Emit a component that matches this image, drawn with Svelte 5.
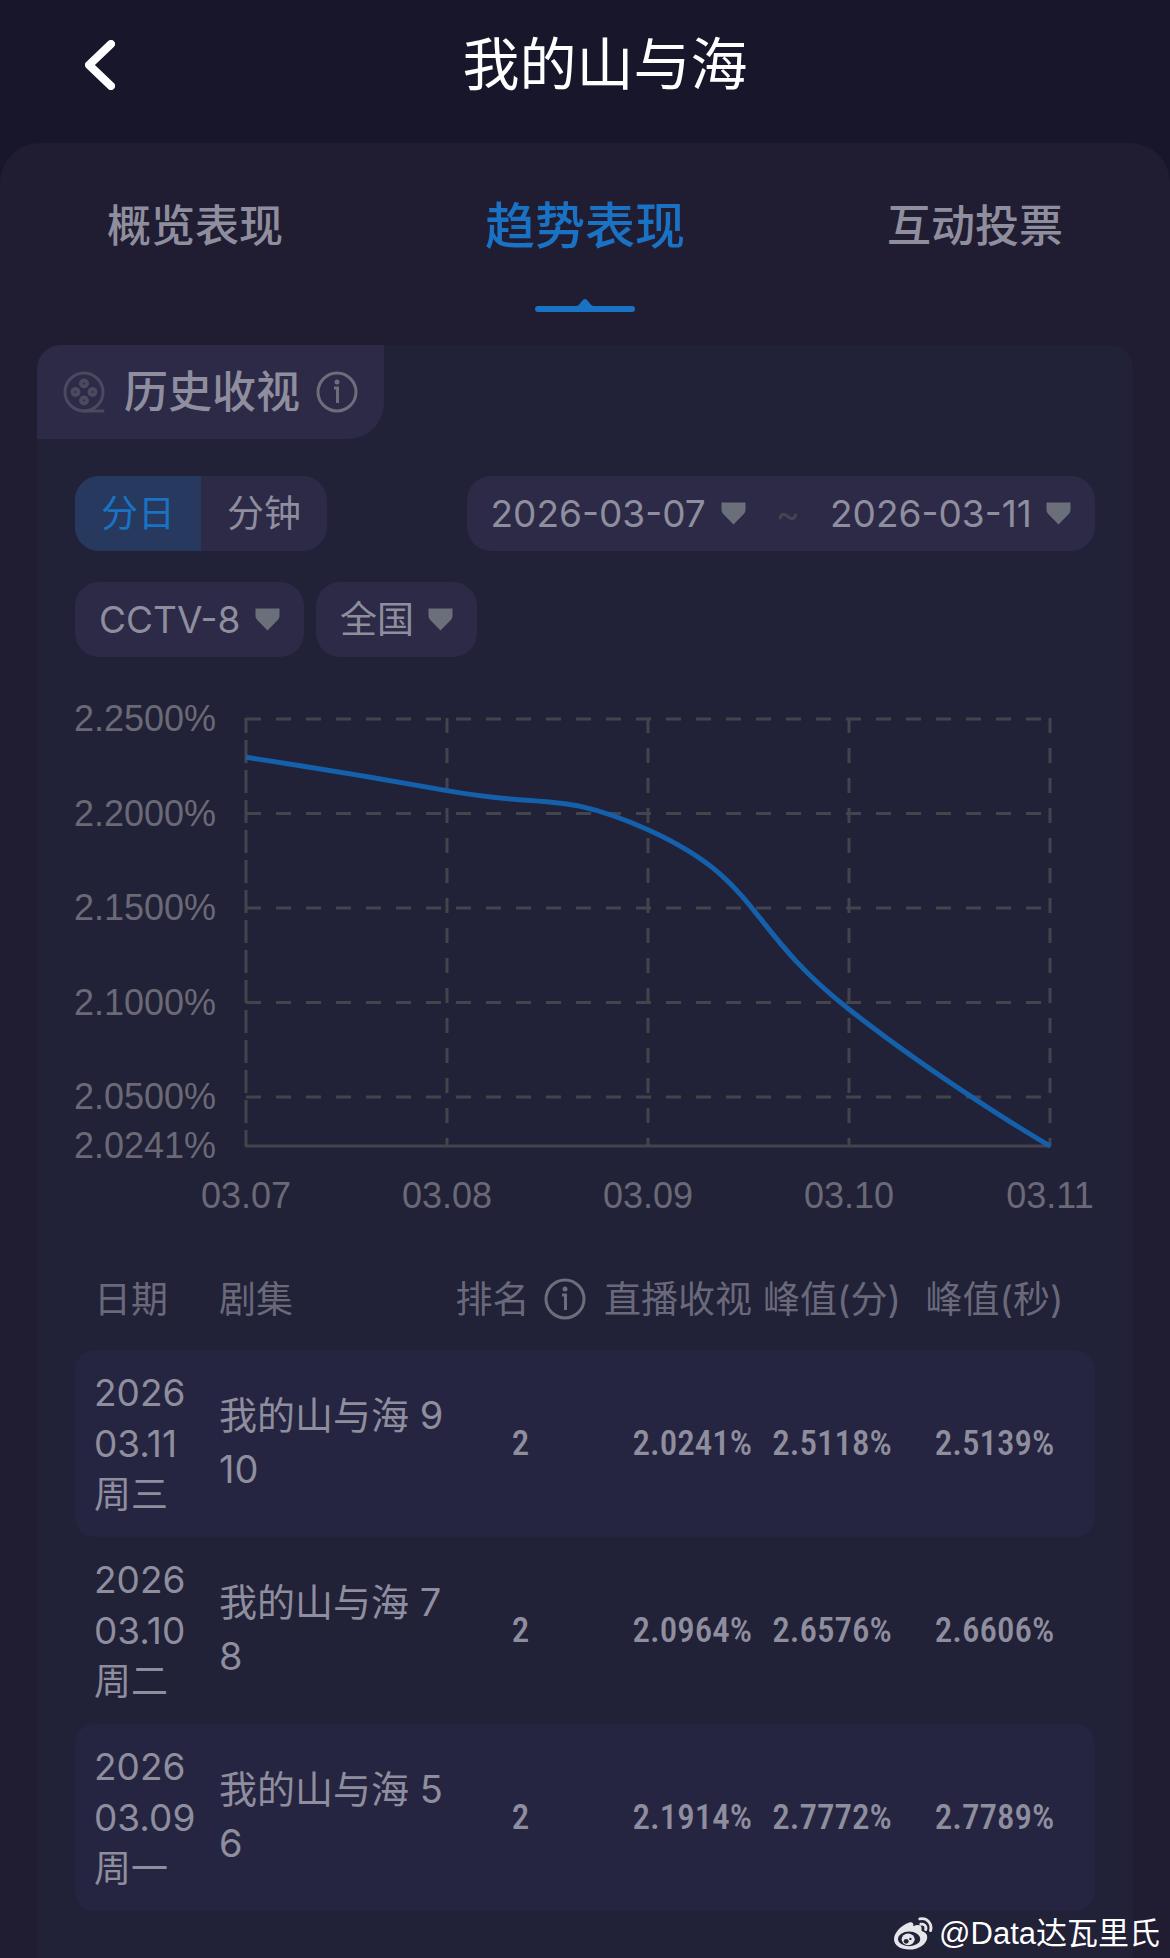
<script>
  const tabs = ['概览表现', '趋势表现', '互动投票'];
  let activeTab = '趋势表现';

  const modes = ['分日', '分钟'];
  let mode = '分日';

  let channel = 'CCTV-8';
  let region = '全国';
  let startDate = '2026-03-07';
  let endDate = '2026-03-11';

  const points = [
    { date: '03.07', value: 2.2298 },
    { date: '03.08', value: 2.2121 },
    { date: '03.09', value: 2.1914 },
    { date: '03.10', value: 2.0964 },
    { date: '03.11', value: 2.0241 }
  ];
  const ticks = [2.25, 2.2, 2.15, 2.1, 2.05, 2.0241];

  const rows = [
    { date: ['2026', '03.11', '周三'], episode: '我的山与海 9 10', rank: 2, live: '2.0241%', minute: '2.5118%', second: '2.5139%' },
    { date: ['2026', '03.10', '周二'], episode: '我的山与海 7 8', rank: 2, live: '2.0964%', minute: '2.6576%', second: '2.6606%' },
    { date: ['2026', '03.09', '周一'], episode: '我的山与海 5 6', rank: 2, live: '2.1914%', minute: '2.7772%', second: '2.7789%' }
  ];

  // plot area inside the 1020 x 558 chart
  const left = 171;
  const right = 975;
  const top = 29;
  const bottom = 456;
  const min = 2.0241;
  const max = 2.25;

  const x = (i) => left + (i * (right - left)) / (points.length - 1);
  const y = (v) => bottom - ((v - min) / (max - min)) * (bottom - top);
  const clamp = (v, a, b) => Math.min(Math.max(v, Math.min(a, b)), Math.max(a, b));

  // smooth line whose control points never leave the range of their neighbours
  function smoothPath(list) {
    const pts = list.map((p, i) => [x(i), y(p.value)]);
    const dist = (a, b) => Math.hypot(b[0] - a[0], b[1] - a[1]);
    const controls = pts.map((p, i) => {
      const prev = pts[i - 1];
      const next = pts[i + 1];
      if (!prev || !next) return { before: p, after: p };
      const lenPrev = dist(prev, p);
      const lenNext = dist(p, next);
      const k = 0.5 / (lenPrev + lenNext);
      const v = [next[0] - prev[0], next[1] - prev[1]];
      const before = [p[0] - v[0] * k * lenPrev, clamp(p[1] - v[1] * k * lenPrev, prev[1], p[1])];
      const scale = lenNext / lenPrev;
      const after = [p[0] + (p[0] - before[0]) * scale, clamp(p[1] + (p[1] - before[1]) * scale, p[1], next[1])];
      return { before, after };
    });
    let d = `M${pts[0]}`;
    for (let i = 1; i < pts.length; i++) {
      d += ` C${controls[i - 1].after} ${controls[i].before} ${pts[i]}`;
    }
    return d;
  }

  const linePath = smoothPath(points);
</script>

{#snippet arrow()}
  <svg class="arrow" viewBox="0 0 25 23" aria-hidden="true">
    <path d="M0.500 0.500h24v7.500c0 1.500-.6 2.600-1.500 3.700L12.500 22.500 2 11.700C1.100 10.600.5 9.500.5 8z" />
  </svg>
{/snippet}

{#snippet info()}
  <svg class="info" viewBox="0 0 42 42" aria-hidden="true">
    <circle cx="21" cy="21" r="19" />
    <path d="M18 17h3.500v15" />
    <circle class="dot" cx="21" cy="11" r="2.500" />
  </svg>
{/snippet}

<div class="page">
  <header class="header">
    <button class="back" aria-label="返回">
      <svg viewBox="0 0 30 50" aria-hidden="true">
        <path d="M26 4L4 25l22 21" />
      </svg>
    </button>
    <h1>我的山与海</h1>
  </header>

  <main class="panel">
    <nav class="tabs">
      {#each tabs as tab}
        <button class="tab" class:active={tab === activeTab} on:click={() => (activeTab = tab)}>
          {tab}
          {#if tab === activeTab}
            <svg class="marker" viewBox="0 0 100 14" aria-hidden="true">
              <path d="M3 7h38c4 0 6-7 9-7s5 7 9 7h38a3 3 0 0 1 0 6H3a3 3 0 0 1 0-6z" />
            </svg>
          {/if}
        </button>
      {/each}
    </nav>

    <section class="card">
      <div class="card-title">
        <svg class="reel" viewBox="0 0 42 42" aria-hidden="true">
          <circle cx="21" cy="21" r="19" />
          <path d="M21 40h19" />
          <circle class="hole" cx="21" cy="12.500" r="3" />
          <circle class="hole" cx="12.500" cy="21" r="3" />
          <circle class="hole" cx="29.500" cy="21" r="3" />
          <circle class="hole" cx="21" cy="29.500" r="3" />
        </svg>
        <h2>历史收视</h2>
        {@render info()}
      </div>

      <div class="filters">
        <div class="filter-row">
          <div class="segment">
            {#each modes as m}
              <button class:selected={m === mode} on:click={() => (mode = m)}>{m}</button>
            {/each}
          </div>
          <div class="chip">
            <label class="field">
              <select aria-label="开始日期" bind:value={startDate}>
                <option>2026-03-07</option>
              </select>
              {@render arrow()}
            </label>
            <span class="tilde">~</span>
            <label class="field">
              <select aria-label="结束日期" bind:value={endDate}>
                <option>2026-03-11</option>
              </select>
              {@render arrow()}
            </label>
          </div>
        </div>
        <div class="filter-row start">
          <label class="chip field">
            <select aria-label="频道" bind:value={channel}>
              <option>CCTV-8</option>
            </select>
            {@render arrow()}
          </label>
          <label class="chip field">
            <select aria-label="地区" bind:value={region}>
              <option>全国</option>
            </select>
            {@render arrow()}
          </label>
        </div>
      </div>

      <svg class="chart" viewBox="0 0 1020 558" role="img" aria-label="历史收视">
        {#each ticks as tick}
          {#if tick === min}
            <line class="grid" x1={left - 1} x2={right + 1} y1={y(tick)} y2={y(tick)} />
          {:else}
            <line class="grid dashed" x1={left} x2={right} y1={y(tick)} y2={y(tick)} />
          {/if}
          <text class="end" x="141" y={y(tick) + 12}>{tick.toFixed(4)}%</text>
        {/each}
        {#each points as point, i}
          <line class="grid" class:dashed={i > 0} class:axis={i === 0} x1={x(i)} x2={x(i)} y1={top - 1} y2={bottom} />
          <text class="middle" x={x(i)} y="518">{point.date}</text>
        {/each}
        <path class="line" d={linePath} />
      </svg>

      <table>
        <colgroup>
          <col class="c-date" />
          <col class="c-episode" />
          <col class="c-rank" />
          <col class="c-live" />
          <col class="c-minute" />
          <col class="c-second" />
        </colgroup>
        <thead>
          <tr>
            <th class="date">日期</th>
            <th>剧集</th>
            <th class="center"><span class="rank-head">排名 {@render info()}</span></th>
            <th class="right">直播收视</th>
            <th class="center">峰值(分)</th>
            <th class="center last">峰值(秒)</th>
          </tr>
        </thead>
        <tbody>
          {#each rows as row}
            <tr>
              <td class="date">
                {#each row.date as part}
                  <div>{part}</div>
                {/each}
              </td>
              <td class="episode">{row.episode}</td>
              <td class="num center">{row.rank}</td>
              <td class="num right">{row.live}</td>
              <td class="num center">{row.minute}</td>
              <td class="num center last">{row.second}</td>
            </tr>
          {/each}
        </tbody>
      </table>
    </section>
  </main>

  <div class="watermark">
    <svg viewBox="0 0 40 34" aria-hidden="true">
      <path d="M15 5.500c3-1.200 5.500-.2 4.800 3.500 4-1.800 9-2 8.500 3-.1 1-.3 1.600.8 2.200 3 1 5.200 3 5 6.300C33.800 27 25.500 33 15.500 33 7 33 0 29 0 22.500 0 15 8.500 7.500 15 5.500z" />
      <ellipse class="cut" cx="15.500" cy="22" rx="11.500" ry="7.500" />
      <ellipse cx="14.500" cy="22.500" rx="6.700" ry="6" />
      <circle class="cut" cx="12.500" cy="24.500" r="2.500" />
      <circle class="cut" cx="16.800" cy="22" r="1.200" />
      <path class="wave" d="M26.500 1.500c7.500-1.500 13 5 11 12M27.500 7c3.600-.8 6 2 5 5.500" />
    </svg>
    <span>@Data达瓦里氏</span>
  </div>
</div>

<style>
  :global(body) {
    background: #18162a;
  }

  .page {
    position: relative;
    display: flex;
    flex-direction: column;
    min-height: 100vh;
    font-family: 'Inter', 'Noto Sans CJK SC', sans-serif;
    font-size: 37px;
    line-height: 51px;
    color: #8f8e9e;
  }

  button,
  select {
    padding: 0;
    border: none;
    background: none;
    font: inherit;
    color: inherit;
    cursor: pointer;
  }

  h1,
  h2 {
    margin: 0;
    font-weight: 400;
  }

  .header {
    display: grid;
    grid-template-columns: 1fr auto 1fr;
    align-items: center;
    height: 129px;
    padding: 0 0 14px 40px;
  }

  .header h1 {
    font-size: 57px;
    line-height: 80px;
    color: #fff;
  }

  .back {
    justify-self: start;
    display: flex;
    padding: 0 45px;
  }

  .back svg {
    width: 30px;
    height: 50px;
    fill: none;
    stroke: #fff;
    stroke-width: 8;
    stroke-linecap: round;
    stroke-linejoin: round;
  }

  .panel {
    flex: 1;
    padding: 53px 37px 0;
    border-radius: 40px 40px 0 0;
    background: #201d32;
  }

  .tabs {
    display: grid;
    grid-template-columns: repeat(3, 1fr);
    height: 149px;
    margin: 0 -37px;
  }

  .tab {
    display: flex;
    flex-direction: column;
    align-items: center;
    font-size: 44px;
    font-weight: 500;
    line-height: 60px;
  }

  .tab.active {
    font-size: 50px;
    color: #1a72c4;
  }

  .marker {
    width: 100px;
    height: 14px;
    margin-top: 43px;
    fill: #1a72c4;
  }

  .card {
    padding-bottom: 47px;
    border-radius: 24px 24px 0 0;
    background: #212138;
  }

  .card-title {
    display: flex;
    align-items: center;
    width: fit-content;
    height: 94px;
    padding: 0 26px;
    border-radius: 24px 0 36px 0;
    background: #2c2a47;
  }

  .card-title h2 {
    margin: 0 16px 0 19px;
    font-size: 44px;
    font-weight: 500;
    line-height: 60px;
  }

  .reel,
  .info {
    flex: none;
    width: 42px;
    height: 42px;
    fill: none;
    stroke: #6b6f79;
    stroke-width: 3;
  }

  .reel {
    stroke: #4b495f;
    stroke-linecap: round;
  }

  .reel .hole {
    stroke-width: 4;
  }

  .info .dot {
    fill: #6b6f79;
    stroke: none;
  }

  .filters {
    display: flex;
    flex-direction: column;
    gap: 31px;
    padding: 37px 38px 33px;
  }

  .filter-row {
    display: flex;
    justify-content: space-between;
  }

  .filter-row.start {
    justify-content: flex-start;
    gap: 12px;
  }

  .segment {
    display: flex;
    overflow: hidden;
    border-radius: 24px;
    background: #2c2a47;
  }

  .segment button {
    width: 126px;
    height: 75px;
  }

  .segment .selected {
    background: #27395f;
    color: #1a72c4;
  }

  .chip {
    display: flex;
    align-items: center;
    height: 75px;
    padding: 0 24px;
    border-radius: 24px;
    background: #2c2a47;
  }

  .field {
    display: flex;
    align-items: center;
    gap: 14px;
  }

  select {
    appearance: none;
    outline: none;
  }

  .arrow {
    width: 25px;
    height: 23px;
    fill: #6b6f79;
  }

  .tilde {
    margin: 0 30px;
    color: #43454c;
  }

  .chart {
    display: block;
    width: calc(100% - 76px);
    margin: 0 auto;
  }

  .chart text {
    font-family: 'Liberation Sans', Arial, sans-serif;
    font-size: 36px;
    fill: #6a6975;
  }

  .chart .middle {
    text-anchor: middle;
  }

  .chart .end {
    text-anchor: end;
  }

  .grid {
    stroke: #43454c;
    stroke-width: 3;
  }

  .dashed {
    stroke-dasharray: 15 15;
  }

  .axis {
    stroke-dasharray: 23 7;
    stroke-dashoffset: 8;
  }

  .line {
    fill: none;
    stroke: #1460aa;
    stroke-width: 5;
  }

  table {
    width: calc(100% - 76px);
    margin: 0 auto;
    table-layout: fixed;
    border-spacing: 0;
  }

  .c-date {
    width: 144px;
  }

  .c-episode {
    width: 228px;
  }

  .c-rank {
    width: 147px;
  }

  .c-live {
    width: 158px;
  }

  .c-minute {
    width: 160px;
  }

  .c-second {
    width: 183px;
  }

  th {
    height: 102px;
    padding: 0;
    font-weight: 400;
    text-align: left;
    white-space: nowrap;
    color: #6a697a;
  }

  td {
    height: 187px;
    padding: 0;
  }

  .date {
    padding-left: 19px;
  }

  .episode {
    padding-bottom: 4px;
    height: 183px;
    font-size: 38px;
    line-height: 54px;
  }

  .num {
    font-family: 'Roboto Condensed', Roboto, sans-serif;
    font-size: 35px;
    font-weight: 500;
  }

  .center {
    text-align: center;
  }

  .right {
    text-align: right;
  }

  .last {
    padding-right: 18px;
  }

  .rank-head {
    display: flex;
    align-items: center;
    justify-content: center;
    gap: 14px;
  }

  tbody tr:nth-child(odd) td {
    background: #262541;
  }

  tbody td:first-child {
    border-radius: 20px 0 0 20px;
  }

  tbody td:last-child {
    border-radius: 0 20px 20px 0;
  }

  .watermark {
    position: absolute;
    right: 10px;
    bottom: 4px;
    display: flex;
    align-items: center;
    gap: 6px;
    font-family: 'Liberation Sans', 'Noto Sans CJK SC', sans-serif;
    font-size: 31px;
    line-height: 40px;
    color: #fff;
  }

  .watermark svg {
    width: 39px;
    height: 34px;
    fill: #e6e6ea;
  }

  .watermark .cut {
    fill: #222138;
  }

  .watermark .wave {
    fill: none;
    stroke: #e6e6ea;
    stroke-width: 3;
    stroke-linecap: round;
  }
</style>
